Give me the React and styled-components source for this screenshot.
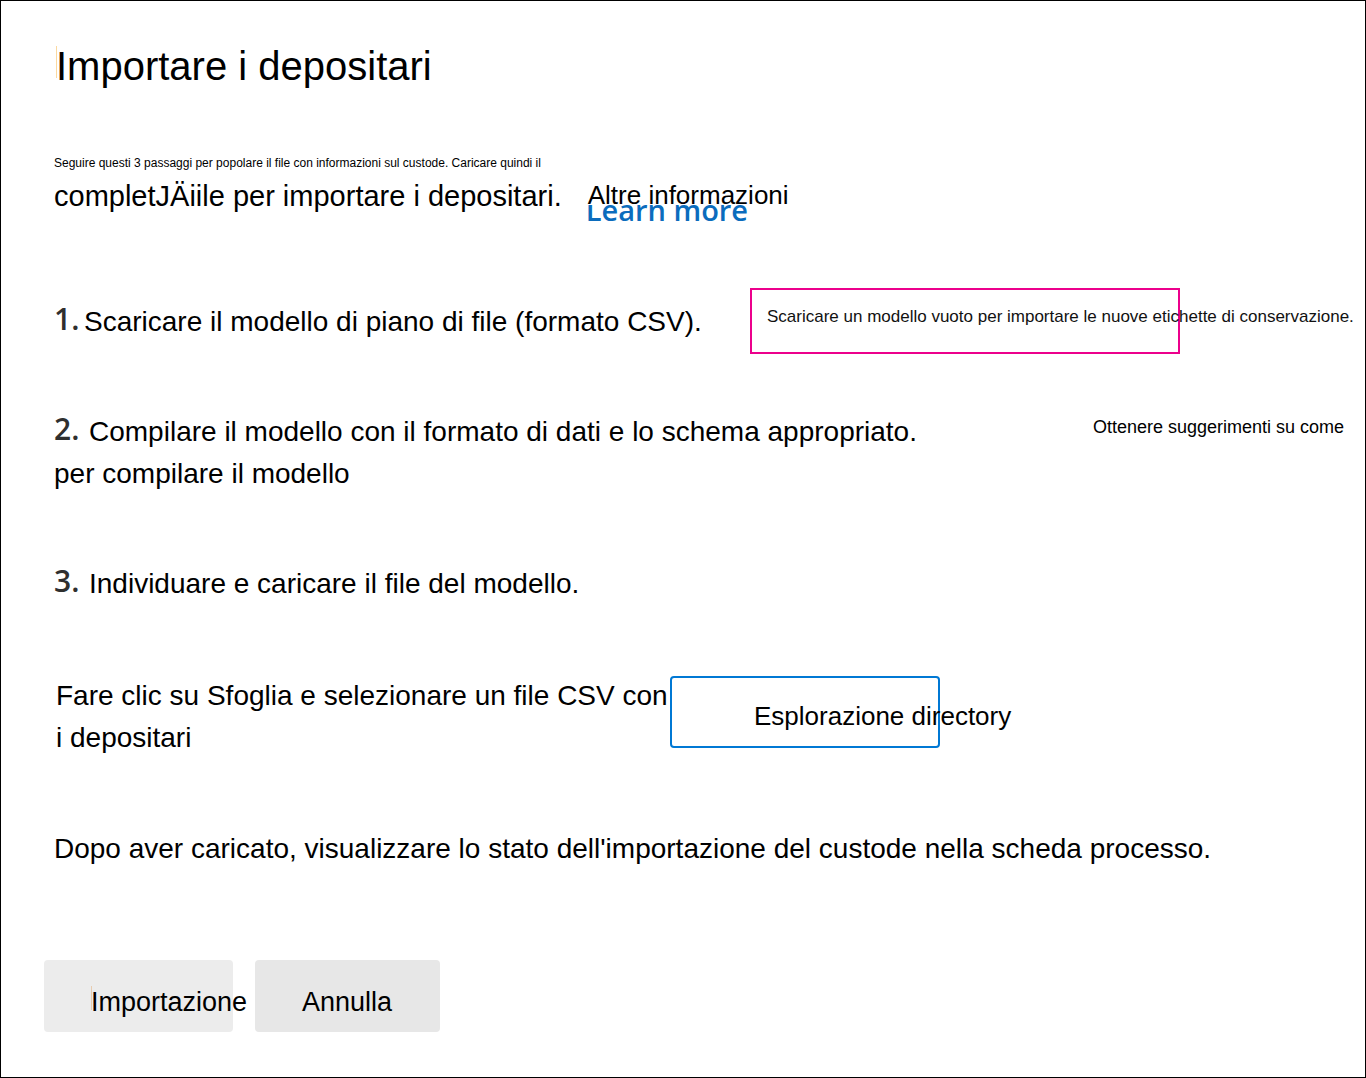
import React from "react";
import styled, { createGlobalStyle } from "styled-components";

const GlobalStyle = createGlobalStyle`
  *, *::before, *::after { box-sizing: border-box; }
  body {
    margin: 0;
    background: #fff;
    color: #000;
    font-family: "Liberation Sans", Arial, sans-serif;
    font-size: 28px;
    line-height: 42px;
  }
`;

const Panel = styled.main`
  min-height: 100vh;
  border: 1px solid #000;
  padding: 41px 21px 45px 53px;
  overflow-x: hidden;
`;

const Title = styled.h1`
  position: relative;
  margin: 0 0 65px;
  padding-left: 2px;
  font-size: 40px;
  line-height: 48px;
  font-weight: 400;

  &::before {
    content: "";
    position: absolute;
    left: 2px;
    top: 4px;
    width: 1px;
    height: 32px;
    background: #fbd9a0;
  }
`;

const Lead = styled.p`
  margin: 0 0 4px;
  font-size: 12px;
  line-height: 16px;
`;

const Intro = styled.div`
  display: flex;
  gap: 24px;
  margin-bottom: 71px;
  font-size: 29px;
  white-space: nowrap;
`;

const IntroText = styled.p`
  margin: 0;
`;

const MoreLink = styled.a`
  position: relative;
  padding-top: 14px;
  height: 42px;
  color: #0b6cbd;
  font-family: "Open Sans", "Noto Sans", sans-serif;
  font-weight: 600;
  line-height: 42px;
  text-decoration: none;
`;

const MoreLabel = styled.span`
  position: absolute;
  left: 2px;
  top: 6px;
  height: 24px;
  background: #fff;
  color: #000;
  font-family: "Liberation Sans", Arial, sans-serif;
  font-size: 26px;
  font-weight: 400;
  line-height: 28px;
`;

const Steps = styled.ol`
  margin: 0 0 70px;
  padding: 0;
  list-style: none;
`;

const Step = styled.li`
  display: grid;
  grid-template-columns: ${(p) => p.$columns || "1fr"};
  align-items: start;
  margin-bottom: ${(p) => p.$gap || 0}px;
  white-space: nowrap;
`;

const StepText = styled.p`
  margin: 0;
  padding-top: ${(p) => p.$inset || 0}px;
`;

const StepNumber = styled.span`
  display: inline-block;
  width: ${(p) => (p.$narrow ? 30 : 35)}px;
  color: #2f2f2f;
  font-family: "Open Sans", "Noto Sans", sans-serif;
  font-size: 30px;
  font-weight: 600;
  line-height: 30px;
  vertical-align: 1px;
`;

const TemplateLink = styled.a`
  display: block;
  height: 66px;
  border: 2px solid #ec008c;
  padding: 15px;
  color: #111;
  font-size: 17px;
  line-height: 24px;
  text-decoration: none;
`;

const TipsLink = styled.a`
  color: #000;
  font-size: 18px;
  line-height: 32px;
  text-decoration: none;
`;

const UploadRow = styled.div`
  display: flex;
  align-items: flex-start;
  margin-bottom: 69px;
  padding-left: 2px;
  white-space: nowrap;
`;

const UploadText = styled.p`
  flex: 0 0 614px;
  margin: 0;
`;

const Button = styled.button`
  height: 72px;
  border: 0;
  border-radius: 4px;
  padding: 12px 0 0 47px;
  color: #000;
  font-family: inherit;
  font-size: 27px;
  line-height: 32px;
  text-align: left;
  white-space: nowrap;
  cursor: pointer;
`;

const BrowseButton = styled(Button)`
  flex: 0 0 270px;
  min-width: 0;
  margin-top: 1px;
  border: 2px solid #0078d4;
  padding: 8px 0 0 82px;
  background: #fff;
  font-size: 26px;
`;

const ImportButton = styled(Button)`
  position: relative;
  width: 189px;
  background: #ececec;

  &::before {
    content: "";
    position: absolute;
    left: 47px;
    top: 26px;
    width: 1px;
    height: 24px;
    background: #e8ccb0;
  }
`;

const CancelButton = styled(Button)`
  width: 185px;
  background: #e7e7e7;
`;

const Status = styled.p`
  margin: 0 0 90px;
  white-space: nowrap;
`;

const Actions = styled.div`
  display: flex;
  gap: 22px;
  margin-left: -10px;
`;

export default function App() {
  return (
    <>
      <GlobalStyle />
      <Panel>
        <Title>Importare i depositari</Title>
        <Lead>
          Seguire questi 3 passaggi per popolare il file con informazioni sul
          custode. Caricare quindi il
        </Lead>
        <Intro>
          <IntroText>completJÄiile per importare i depositari.</IntroText>
          <MoreLink href="#learn-more">
            Learn more
            <MoreLabel>Altre informazioni</MoreLabel>
          </MoreLink>
        </Intro>
        <Steps>
          <Step
            $columns="minmax(0, 696fr) minmax(0, 430fr) minmax(0, 164fr)"
            $gap={57}
          >
            <StepText $inset={13}>
              <StepNumber $narrow>1.</StepNumber>
              Scaricare il modello di piano di file (formato CSV).
            </StepText>
            <TemplateLink href="#template">
              Scaricare un modello vuoto per importare le nuove etichette di
              conservazione.
            </TemplateLink>
          </Step>
          <Step $columns="1fr auto" $gap={68}>
            <StepText>
              <StepNumber>2.</StepNumber>
              Compilare il modello con il formato di dati e lo schema
              appropriato.
              <br />
              per compilare il modello
            </StepText>
            <TipsLink href="#tips">Ottenere suggerimenti su come</TipsLink>
          </Step>
          <Step>
            <StepText>
              <StepNumber>3.</StepNumber>
              Individuare e caricare il file del modello.
            </StepText>
          </Step>
        </Steps>
        <UploadRow>
          <UploadText>
            Fare clic su Sfoglia e selezionare un file CSV con
            <br />i depositari
          </UploadText>
          <BrowseButton type="button">Esplorazione directory</BrowseButton>
        </UploadRow>
        <Status>
          Dopo aver caricato, visualizzare lo stato dell'importazione del
          custode nella scheda processo.
        </Status>
        <Actions>
          <ImportButton type="button">Importazione</ImportButton>
          <CancelButton type="button">Annulla</CancelButton>
        </Actions>
      </Panel>
    </>
  );
}
